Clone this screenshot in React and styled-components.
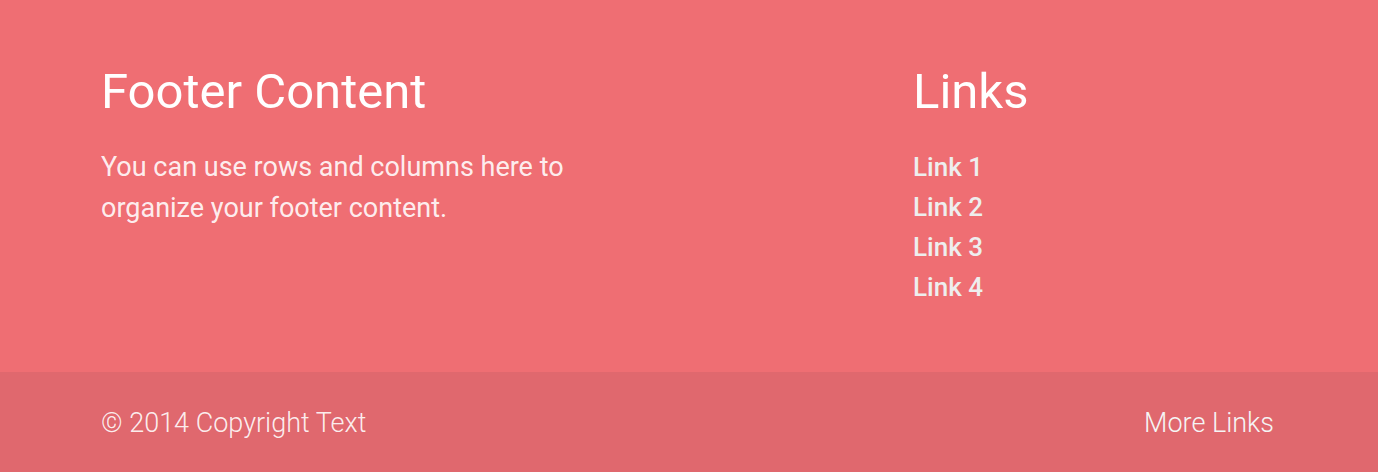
import React from "react";
import styled, { createGlobalStyle } from "styled-components";

const GlobalStyle = createGlobalStyle`
  html, body {
    margin: 0;
    padding: 0;
    background: #ffffff;
  }
  body {
    font-family: Roboto, "Liberation Sans", sans-serif;
  }
`;

const Footer = styled.footer`
  width: 1378px;
  background: #ef6e73;
  color: #ffffff;
`;

const Container = styled.div`
  padding: 0 104px 0 101px;
`;

const Row = styled.div`
  display: grid;
  grid-template-columns: 812px 1fr;
  padding: 65px 0 0;
  height: 372px;
  box-sizing: border-box;
`;

const Heading = styled.h5`
  margin: 0 0 29px;
  font-size: 49px;
  line-height: 53px;
  font-weight: 400;
  color: #ffffff;
`;

const Text = styled.p`
  margin: 0;
  font-size: 27px;
  line-height: 40.5px;
  font-weight: 400;
  color: rgba(255, 255, 255, 0.9);
  max-width: 490px;
`;

const LinkList = styled.ul`
  list-style: none;
  margin: 0;
  padding: 0;
`;

const LinkItem = styled.li`
  font-size: 26px;
  line-height: 40px;
  font-weight: 500;
  color: #eeeeee;
`;

const Copyright = styled.div`
  background: #e0686e;
  height: 100px;
`;

const CopyrightInner = styled(Container)`
  display: flex;
  justify-content: space-between;
  align-items: center;
  height: 100%;
  box-sizing: border-box;
  padding-top: 2px;
  font-size: 27px;
  font-weight: 300;
  color: rgba(255, 255, 255, 0.9);
`;

const MoreLink = styled.a`
  color: #f5f5f5;
  text-decoration: none;
`;

const links = ["Link 1", "Link 2", "Link 3", "Link 4"];

export default function App() {
  return (
    <>
      <GlobalStyle />
      <Footer>
        <Container>
          <Row>
            <div>
              <Heading>Footer Content</Heading>
              <Text>
                You can use rows and columns here to organize your footer
                content.
              </Text>
            </div>
            <div>
              <Heading>Links</Heading>
              <LinkList>
                {links.map((l) => (
                  <LinkItem key={l}>{l}</LinkItem>
                ))}
              </LinkList>
            </div>
          </Row>
        </Container>
        <Copyright>
          <CopyrightInner>
            <span>© 2014 Copyright Text</span>
            <MoreLink href="#">More Links</MoreLink>
          </CopyrightInner>
        </Copyright>
      </Footer>
    </>
  );
}
